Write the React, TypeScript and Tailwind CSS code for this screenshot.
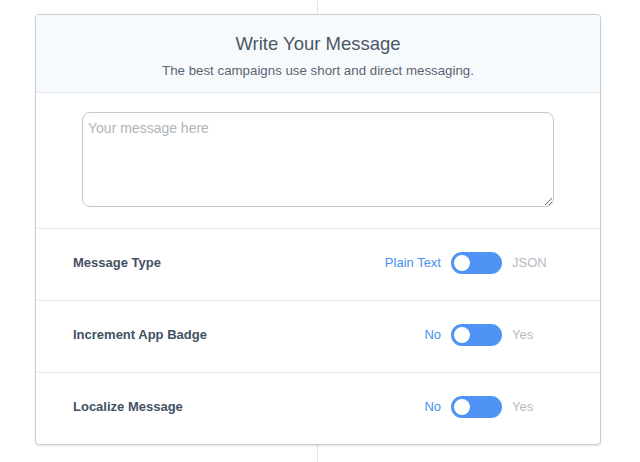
import React from "react";

// one settings row with a two-sided switch
const ToggleRow: React.FC<{ label: string; left: string; right: string }> = ({ label, left, right }) => {
  return (
    <div className="flex h-[72px] items-center border-t border-[#e9ecef] pb-[4px] pl-[37px] pr-[38px]">
      <div className="flex-1 text-[13px] font-bold text-[#435164]">{label}</div>
      <div className="text-[13px] text-[#4a90f0]">{left}</div>
      <div className="ml-[10px] flex h-[22px] w-[51px] items-center rounded-full bg-[#4f93f5] p-[1px]">
        <div className="h-[20px] w-[20px] rounded-full border-[2px] border-[#4f93f5] bg-white"></div>
      </div>
      <div className="ml-[10px] w-[50px] text-[13px] text-[#b5bac1]">{right}</div>
    </div>
  );
};

const App: React.FC = () => {
  return (
    <div className="relative h-[462px] w-[640px] bg-white font-['Liberation_Sans',Arial,sans-serif]">
      {/* the thin guide line behind the card */}
      <div className="absolute left-[317px] top-0 h-full w-px bg-[#dfe2e6]"></div>
      <div className="relative pt-[14px] pl-[35px]">
        <div className="w-[566px] overflow-hidden rounded-[4px] border border-[#c9ced4] bg-white shadow-[0_1px_2px_rgba(0,0,0,0.12)]">
          <div className="h-[78px] border-b border-[#e6e9ec] bg-[#f7fafd] pt-[18px] text-center">
            <h1 className="text-[18.5px] leading-[22px] text-[#4b5767]">Write Your Message</h1>
            <p className="mt-[8px] text-[13.3px] leading-[16px] text-[#5a6573]">
              The best campaigns use short and direct messaging.
            </p>
          </div>
          <div className="px-[46px] pt-[19px] pb-[21px]">
            <textarea
              placeholder="Your message here"
              className="block h-[95px] w-full resize-y rounded-[8px] border border-[#c4c9cf] px-[5px] py-[5px] text-[14px] text-[#333] placeholder:text-[#b0b4b9] outline-none"
            ></textarea>
          </div>
          <ToggleRow label="Message Type" left="Plain Text" right="JSON" />
          <ToggleRow label="Increment App Badge" left="No" right="Yes" />
          <ToggleRow label="Localize Message" left="No" right="Yes" />
        </div>
      </div>
    </div>
  );
};

export default App;
